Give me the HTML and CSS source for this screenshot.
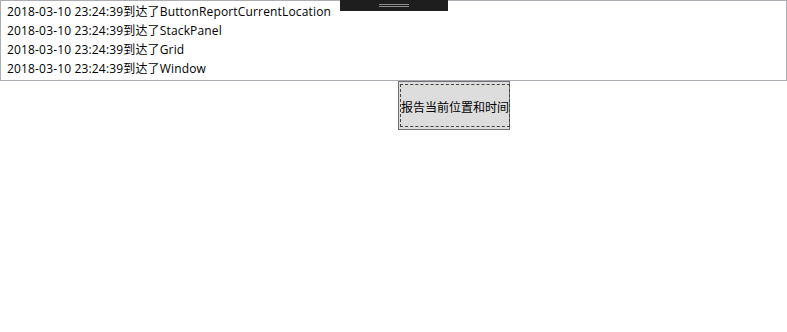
FILE: index.html
```html
<!DOCTYPE html>
<html>
<head>
<meta charset="utf-8">
<link rel="stylesheet" href="styles.css">
</head>
<body>
<div class="window">
  <div class="listbox">
    <div class="item">2018-03-10 23:24:39到达了ButtonReportCurrentLocation</div>
    <div class="item">2018-03-10 23:24:39到达了StackPanel</div>
    <div class="item">2018-03-10 23:24:39到达了Grid</div>
    <div class="item">2018-03-10 23:24:39到达了Window</div>
  </div>
  <div class="btn-row">
    <button class="btn"><span class="focus">报告当前位置和时间</span></button>
  </div>
  <div class="debug-bar"><span class="grip"></span></div>
</div>
</body>
</html>
```
FILE: styles.css
```css
html, body {
  margin: 0;
  padding: 0;
  background: #ffffff;
}
.window {
  position: relative;
  width: 787px;
  height: 332px;
  font-family: "Open Sans", "Noto Sans CJK SC", sans-serif;
  font-size: 12px;
  color: #000000;
}
.listbox {
  box-sizing: border-box;
  width: 787px;
  height: 81px;
  border: 1px solid #abadb3;
  padding: 1px 0 0 6px;
  display: flex;
  flex-direction: column;
}
.item {
  height: 19px;
  line-height: 19px;
  white-space: nowrap;
  letter-spacing: 0.16px;
}
.btn-row {
  display: flex;
  padding-left: 398px;
}
.btn {
  box-sizing: border-box;
  width: 112px;
  height: 49px;
  margin: 0;
  padding: 2px 1px;
  border: 1px solid #707070;
  background: #dddddd;
  font: inherit;
  color: #000000;
  display: flex;
}
.focus {
  flex: 1;
  display: flex;
  align-items: center;
  justify-content: center;
  padding-top: 1px;
  border: 1px dashed #444444;
  white-space: nowrap;
  font-family: "Noto Sans CJK SC", sans-serif;
  font-size: 12px;
}
.debug-bar {
  position: absolute;
  left: 340px;
  top: 0;
  width: 108px;
  height: 11px;
  background: #1e1e1e;
  display: flex;
  justify-content: center;
}
.grip {
  margin-top: 4px;
  width: 30px;
  height: 1px;
  border-top: 1px solid #8a8a8a;
  border-bottom: 1px solid #8a8a8a;
}
```
